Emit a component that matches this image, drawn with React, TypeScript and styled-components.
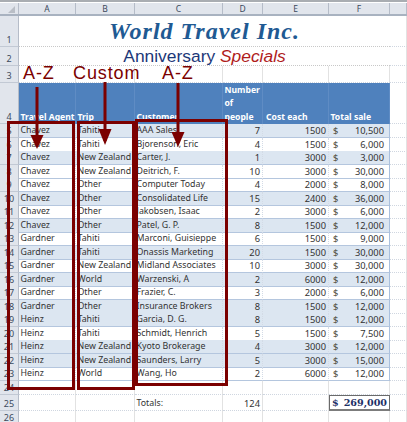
import React from "react";
import styled, { createGlobalStyle, css } from "styled-components";

const Global = createGlobalStyle`
  html, body { margin: 0; padding: 0; background: #fff; overflow: hidden; }
  * { box-sizing: border-box; }
`;

const columns = "19px 57px 59px 88px 40px 66px 61px 17px";
const maroon = "#7b0000";

const Sheet = styled.div`
  position: relative;
  width: 407px;
  height: 422px;
  overflow: hidden;
  font-family: "Noto Sans", "DejaVu Sans", sans-serif;
  font-size: 8.8px;
  color: #333;
  background: #fff;
  border-top: 2px solid #a9adb2;
  padding-top: 1px;
`;

const ColumnBar = styled.div`
  display: grid;
  grid-template-columns: ${columns};
  height: 13px;
  background: #e1e5ec;
  border-bottom: 2px solid #a8b2c0;
`;

const Corner = styled.div`
  position: relative;
  border-right: 1px solid #b5bcc8;
  &::after {
    content: "";
    position: absolute;
    right: 3px;
    bottom: 1px;
    border-style: solid;
    border-width: 0 0 7px 7px;
    border-color: transparent transparent #b9bec6 transparent;
  }
`;

const ColumnHead = styled.div`
  display: flex;
  align-items: center;
  justify-content: center;
  border-right: 1px solid #b5bcc8;
  font-size: 8.5px;
  color: #3c4a5c;
`;

const Row = styled.div<{ $h: number }>`
  display: grid;
  grid-template-columns: ${columns};
  height: ${(p) => p.$h}px;
`;

const RowNumber = styled.div`
  display: flex;
  align-items: flex-end;
  justify-content: center;
  background: #e1e5ec;
  border-right: 1px solid #b5bcc8;
  border-bottom: 1px solid #c2c9d4;
  font-size: 9px;
  line-height: 13px;
  color: #3c4a5c;
`;

const Banner = styled.div`
  grid-column: 2 / span 6;
  display: flex;
  align-items: center;
  justify-content: center;
  border-bottom: 1px dotted #c8c8c8;
`;

const Blank = styled.div`
  border-right: 1px solid #e2e2e2;
  border-bottom: 1px dotted #cfd6e0;
`;

const Title = styled.div`
  font-family: "Liberation Serif", "DejaVu Serif", serif;
  font-style: italic;
  font-weight: 700;
  font-size: 24px;
  line-height: 28px;
  letter-spacing: 1px;
  color: #1f5a93;
  white-space: nowrap;
`;

const Subtitle = styled.div`
  font-family: "Liberation Sans", Arial, sans-serif;
  font-size: 17.4px;
  line-height: 17px;
  color: #1c3878;
  white-space: nowrap;
`;

const Specials = styled.span`
  font-style: italic;
  color: #b01c1c;
`;

const Head = styled.div<{ $pad?: number }>`
  display: flex;
  align-items: flex-end;
  background: #4f81bd;
  color: #fff;
  font-weight: 700;
  font-size: 8.6px;
  line-height: 13.5px;
  padding-left: ${(p) => p.$pad ?? 1.5}px;
  white-space: nowrap;
  border-right: 1px solid #5f8cc4;
`;

const Cell = styled.div<{ $band: boolean; $right?: boolean }>`
  display: flex;
  align-items: center;
  overflow: hidden;
  white-space: nowrap;
  padding: 0 2px 0 1.5px;
  line-height: 13px;
  border-bottom: 1px solid #b4c6de;
  border-right: 1px dotted #d3dbe6;
  ${(p) => p.$band && css`background: #dce6f1;`}
  ${(p) => p.$right && css`justify-content: flex-end; font-size: 9.3px;`}
`;

const MoneyCell = styled(Cell)`
  justify-content: space-between;
  padding: 0 5px 0 4px;
  font-size: 9.3px;
  border-right: 1px solid #a9c0de;
`;

const Dollar = styled.span`
  color: #4a4a38;
`;

const Label = styled.div`
  display: flex;
  align-items: flex-end;
  padding-left: 1.5px;
  border-right: 1px solid #e2e2e2;
  border-bottom: 1px dotted #cfd6e0;
  line-height: 13px;
`;

const NumberLabel = styled(Label)`
  justify-content: flex-end;
  padding-right: 2px;
  font-size: 9.3px;
`;

const TotalBox = styled.div`
  display: flex;
  align-items: center;
  justify-content: center;
  gap: 5px;
  border: 1px solid #6a6a6a;
  border-bottom: 2px solid #7c7c7c;
  font-family: "DejaVu Serif", "Liberation Serif", serif;
  font-weight: 700;
  font-size: 9.6px;
  color: #1c2f66;
`;

const Callout = styled.div<{ $x: number; $w: number; $y: number; $h: number }>`
  position: absolute;
  left: ${(p) => p.$x}px;
  top: ${(p) => p.$y}px;
  width: ${(p) => p.$w}px;
  height: ${(p) => p.$h}px;
  border: 3px solid ${maroon};
`;

const SortLabel = styled.div<{ $x: number }>`
  position: absolute;
  left: ${(p) => p.$x}px;
  top: 64px;
  font-family: "Liberation Sans", Arial, sans-serif;
  font-size: 18px;
  line-height: 14px;
  letter-spacing: 0.9px;
  color: ${maroon};
`;

const ArrowSvg = styled.svg<{ $x: number; $y: number }>`
  position: absolute;
  left: ${(p) => p.$x}px;
  top: ${(p) => p.$y}px;
`;

function Arrow({ x, y, tip, head }: { x: number; y: number; tip: number; head: number }) {
  const h = tip - y;
  return (
    <ArrowSvg $x={x - 7} $y={y} width={14} height={h} viewBox={`0 0 14 ${h}`}>
      <rect x={5.5} y={0} width={3} height={h - 4} fill={maroon} />
      <polygon points={`0.5,${h - head} 13.5,${h - head} 7,${h}`} fill={maroon} />
    </ArrowSvg>
  );
}

type Rec = [string, string, string, number, number, string, boolean];

const data: Rec[] = [
  ["Chavez", "Tahiti", "AAA Sales", 7, 1500, "10,500", true],
  ["Chavez", "Tahiti", "Bjorenson, Eric", 4, 1500, "6,000", false],
  ["Chavez", "New Zealand", "Carter, J.", 1, 3000, "3,000", true],
  ["Chavez", "New Zealand", "Deitrich, F.", 10, 3000, "30,000", false],
  ["Chavez", "Other", "Computer Today", 4, 2000, "8,000", false],
  ["Chavez", "Other", "Consolidated Life", 15, 2400, "36,000", true],
  ["Chavez", "Other", "Jakobsen, Isaac", 2, 3000, "6,000", false],
  ["Chavez", "Other", "Patel, G. P.", 8, 1500, "12,000", true],
  ["Gardner", "Tahiti", "Marconi, Guisieppe", 6, 1500, "9,000", false],
  ["Gardner", "Tahiti", "Onassis Marketing", 20, 1500, "30,000", true],
  ["Gardner", "New Zealand", "Midland Associates", 10, 3000, "30,000", false],
  ["Gardner", "World", "Warzenski, A", 2, 6000, "12,000", true],
  ["Gardner", "Other", "Frazier, C.", 3, 2000, "6,000", false],
  ["Gardner", "Other", "Insurance Brokers", 8, 1500, "12,000", true],
  ["Heinz", "Tahiti", "Garcia, D. G.", 8, 1500, "12,000", true],
  ["Heinz", "Tahiti", "Schmidt, Henrich", 5, 1500, "7,500", false],
  ["Heinz", "New Zealand", "Kyoto Brokerage", 4, 3000, "12,000", true],
  ["Heinz", "New Zealand", "Saunders, Larry", 5, 3000, "15,000", true],
  ["Heinz", "World", "Wang, Ho", 2, 6000, "12,000", false],
];

const blanks = (n: number) => Array.from({ length: n }, (_, i) => <Blank key={i} />);

export default function App() {
  return (
    <>
      <Global />
      <Sheet>
        <ColumnBar>
          <Corner />
          {["A", "B", "C", "D", "E", "F", ""].map((c, i) => (
            <ColumnHead key={i}>{c}</ColumnHead>
          ))}
        </ColumnBar>
        <Row $h={31}>
          <RowNumber>1</RowNumber>
          <Banner>
            <Title>World Travel Inc.</Title>
          </Banner>
          <Blank />
        </Row>
        <Row $h={19}>
          <RowNumber>2</RowNumber>
          <Banner>
            <Subtitle>
              Anniversary <Specials>Specials</Specials>
            </Subtitle>
          </Banner>
          <Blank />
        </Row>
        <Row $h={17}>
          <RowNumber>3</RowNumber>
          {blanks(7)}
        </Row>
        <Row $h={41}>
          <RowNumber>4</RowNumber>
          <Head>Travel Agent</Head>
          <Head>Trip</Head>
          <Head>Customer</Head>
          <Head>
            <div>
              Number
              <br />
              of
              <br />
              people
            </div>
          </Head>
          <Head $pad={3}>Cost each</Head>
          <Head>Total sale</Head>
          <Blank />
        </Row>
        {data.map((r, i) => (
          <Row $h={13.5} key={i}>
            <RowNumber>{i + 5}</RowNumber>
            <Cell $band={r[6]}>{r[0]}</Cell>
            <Cell $band={r[6]}>{r[1]}</Cell>
            <Cell $band={r[6]}>{r[2]}</Cell>
            <Cell $band={r[6]} $right>{r[3]}</Cell>
            <Cell $band={r[6]} $right>{r[4]}</Cell>
            <MoneyCell $band={r[6]}>
              <Dollar>$</Dollar>
              <span>{r[5]}</span>
            </MoneyCell>
            <Blank />
          </Row>
        ))}
        <Row $h={14}>
          <RowNumber>24</RowNumber>
          {blanks(7)}
        </Row>
        <Row $h={16}>
          <RowNumber>25</RowNumber>
          <Blank />
          <Blank />
          <Label>Totals:</Label>
          <NumberLabel>124</NumberLabel>
          <Blank />
          <TotalBox>
            <span>$</span>
            <span>269,000</span>
          </TotalBox>
          <Blank />
        </Row>
        <Row $h={13}>
          <RowNumber>26</RowNumber>
          {blanks(7)}
        </Row>

        <Callout $x={7} $w={68} $y={119} $h={269} />
        <Callout $x={77} $w={58} $y={119} $h={269} />
        <Callout $x={135} $w={93} $y={117} $h={267} />
        <SortLabel $x={23}>A-Z</SortLabel>
        <SortLabel $x={73}>Custom</SortLabel>
        <SortLabel $x={162}>A-Z</SortLabel>
        <Arrow x={36.5} y={85} tip={147} head={14} />
        <Arrow x={104.5} y={80} tip={143} head={16} />
        <Arrow x={177.5} y={81} tip={145} head={15} />
      </Sheet>
    </>
  );
}
